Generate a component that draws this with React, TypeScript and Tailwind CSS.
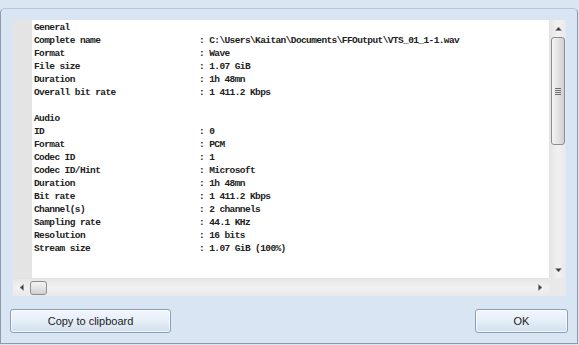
import React from "react";

type Row = { label?: string; value?: string; head?: string };

const rows: Row[] = [
  { head: "General" },
  { label: "Complete name", value: "C:\\Users\\Kaitan\\Documents\\FFOutput\\VTS_01_1-1.wav" },
  { label: "Format", value: "Wave" },
  { label: "File size", value: "1.07 GiB" },
  { label: "Duration", value: "1h 48mn" },
  { label: "Overall bit rate", value: "1 411.2 Kbps" },
  {},
  { head: "Audio" },
  { label: "ID", value: "0" },
  { label: "Format", value: "PCM" },
  { label: "Codec ID", value: "1" },
  { label: "Codec ID/Hint", value: "Microsoft" },
  { label: "Duration", value: "1h 48mn" },
  { label: "Bit rate", value: "1 411.2 Kbps" },
  { label: "Channel(s)", value: "2 channels" },
  { label: "Sampling rate", value: "44.1 KHz" },
  { label: "Resolution", value: "16 bits" },
  { label: "Stream size", value: "1.07 GiB (100%)" },
];

function Arrow({ dir }: { dir: "up" | "down" | "left" | "right" }) {
  const pts: Record<string, string> = {
    up: "0.5,4.5 3.5,1 6.5,4.5",
    down: "0.5,0.5 6.5,0.5 3.5,4",
    left: "4.5,0.5 4.5,6.5 1,3.5",
    right: "0.5,0.5 0.5,6.5 4,3.5",
  };
  const vertical = dir === "up" || dir === "down";
  return (
    <svg width={vertical ? 7 : 5} height={vertical ? 5 : 7} viewBox={vertical ? "0 0 7 5" : "0 0 5 7"}>
      <polygon points={pts[dir]} fill="#3c3c3c" stroke="#8a8a8a" strokeWidth="0.5" />
    </svg>
  );
}

function Button({ children, className }: { children: React.ReactNode; className: string }) {
  return (
    <div
      className={
        "flex h-[24px] items-center justify-center rounded-[3px] border border-[#8a9fb8] bg-gradient-to-b from-[#f2f6fb] via-[#e6eef8] to-[#d3e0ef] text-[11px] text-[#1b1b1b] shadow-[inset_0_0_0_1px_rgba(255,255,255,0.7)] " +
        className
      }
      style={{ fontFamily: '"Liberation Sans", Arial, sans-serif' }}
    >
      {children}
    </div>
  );
}

export default function App() {
  return (
    <div className="h-[345px] w-[579px] overflow-hidden bg-[#dbe6f3]">
      <div className="mt-[8px] flex h-[336px] w-[578px] flex-col rounded-t-[5px] border border-[#8e9aa9] border-t-[#b7c6d8] bg-[#d9e5f3] px-[9px] pt-[11px]">
        {/* content panel */}
        <div className="ml-[3px] flex h-[276px] w-[553px] flex-col">
          <div className="flex h-[258px]">
            <div className="w-[19px] bg-[#e4e4e4]" />
            <div
              className="flex-1 overflow-hidden bg-white pl-[2px] pt-[1px] text-[9.5px] font-bold leading-[13px] tracking-[-0.6px] text-[#222]"
              style={{ fontFamily: '"Liberation Mono", "Courier New", monospace' }}
            >
              {rows.map((r, i) => (
                <div key={i} className="flex h-[13px] whitespace-pre">
                  {r.head ? (
                    <span>{r.head}</span>
                  ) : r.label ? (
                    <>
                      <span className="w-[165px]">{r.label}</span>
                      <span>{": " + r.value}</span>
                    </>
                  ) : null}
                </div>
              ))}
            </div>
            {/* vertical scrollbar */}
            <div className="flex w-[17px] flex-col border-l border-[#e2e2e2] bg-gradient-to-r from-[#e6e6e6] via-[#f1f1f1] to-[#e9e9e9]">
              <div className="flex h-[17px] items-center justify-center">
                <Arrow dir="up" />
              </div>
              <div className="ml-[1px] flex h-[108px] w-[14px] items-center justify-center rounded-[3px] border border-[#8d8d8d] bg-gradient-to-r from-[#f4f4f4] via-[#e4e4e4] to-[#cfcfcf]">
                <div className="flex flex-col gap-[1px]">
                  <div className="h-[1px] w-[6px] bg-[#6e6e6e]" />
                  <div className="h-[1px] w-[6px] bg-[#6e6e6e]" />
                  <div className="h-[1px] w-[6px] bg-[#6e6e6e]" />
                  <div className="h-[1px] w-[6px] bg-[#6e6e6e]" />
                </div>
              </div>
              <div className="flex-1" />
              <div className="flex h-[16px] items-center justify-center">
                <Arrow dir="down" />
              </div>
            </div>
          </div>
          {/* horizontal scrollbar row */}
          <div className="flex h-[18px]">
            <div className="flex flex-1 items-center border-t border-[#e2e2e2] bg-gradient-to-b from-[#e6e6e6] via-[#f1f1f1] to-[#e9e9e9]">
              <div className="flex w-[17px] items-center justify-center">
                <Arrow dir="left" />
              </div>
              <div className="h-[14px] w-[17px] rounded-[3px] border border-[#8d8d8d] bg-gradient-to-b from-[#f4f4f4] via-[#e4e4e4] to-[#cfcfcf]" />
              <div className="flex-1" />
              <div className="flex w-[17px] items-center justify-center">
                <Arrow dir="right" />
              </div>
            </div>
            <div className="w-[17px] bg-[#e9e9e9]" />
          </div>
        </div>
        {/* buttons */}
        <div className="mt-[13px] flex justify-between">
          <Button className="w-[161px]">Copy to clipboard</Button>
          <Button className="w-[93px]">OK</Button>
        </div>
      </div>
    </div>
  );
}
